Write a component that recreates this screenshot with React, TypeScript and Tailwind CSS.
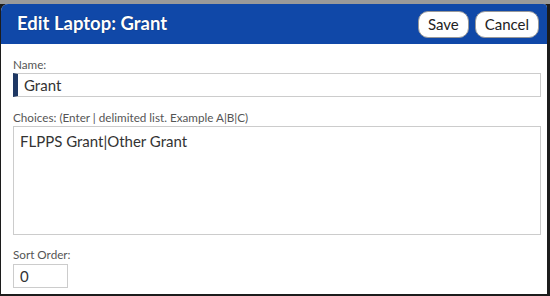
export default function App() {
  const font = { fontFamily: '"Segoe UI", Lato, "Open Sans", sans-serif' };
  return (
    <div
      className="w-[550px] h-[296px] bg-[#1c1c1c] border-t-[4px] border-t-[#9a9a9a] pl-[1px] pr-[3px] pb-[2px]"
      style={font}
    >
      <div className="h-full bg-white rounded-tl-[7px] rounded-tr-[4px] overflow-hidden flex flex-col">
        <div className="h-[40px] bg-[#1048a8] flex items-center justify-between pl-[16px] pr-[8px] shrink-0">
          <h1 className="text-white font-bold text-[18.5px] [text-shadow:0_0_1px_rgba(0,0,0,0.5)]">
            Edit Laptop: Grant
          </h1>
          <div className="flex gap-[6px] pt-[1px]">
            <button className="h-[27px] px-[9px] bg-white border border-[#999] rounded-[10px] text-[15px] text-[#222]">
              Save
            </button>
            <button className="h-[27px] px-[9px] bg-white border border-[#999] rounded-[10px] text-[15px] text-[#222]">
              Cancel
            </button>
          </div>
        </div>
        <div className="flex flex-col px-[12px] pt-[13px]">
          <label className="text-[11.7px] text-[#555] leading-[15px]">Name:</label>
          <div className="mt-[1px] h-[24px] border border-[#ccc] border-l-[5px] border-l-[#1f3864] flex items-center pl-[6px] text-[15px] text-[#333] w-[528px]">
            Grant
          </div>
          <label className="mt-[13px] text-[11.7px] text-[#555] leading-[15px]">
            Choices: (Enter | delimited list. Example A|B|C)
          </label>
          <div className="mt-[1px] h-[109px] border border-[#ccc] px-[6px] pt-[3px] text-[15px] text-[#333] w-[528px]">
            FLPPS Grant|Other Grant
          </div>
          <label className="mt-[12px] text-[11.7px] text-[#555] leading-[15px]">Sort Order:</label>
          <div className="mt-[2px] h-[24px] w-[55px] border border-[#ccc] flex items-center pl-[6px] text-[15px] text-[#333]">
            0
          </div>
        </div>
      </div>
    </div>
  );
}
